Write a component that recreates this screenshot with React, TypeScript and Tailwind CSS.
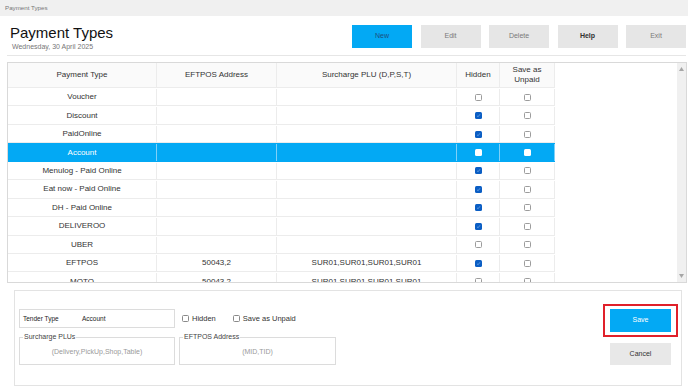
import React from "react";

type Row = {
  name: string;
  eftpos?: string;
  plu?: string;
  hidden: boolean;
  selected?: boolean;
};

const rows: Row[] = [
  { name: "Voucher", hidden: false },
  { name: "Discount", hidden: true },
  { name: "PaidOnline", hidden: true },
  { name: "Account", hidden: false, selected: true },
  { name: "Menulog - Paid Online", hidden: true },
  { name: "Eat now - Paid Online", hidden: true },
  { name: "DH - Paid Online", hidden: true },
  { name: "DELIVEROO", hidden: true },
  { name: "UBER", hidden: false },
  { name: "EFTPOS", eftpos: "50043,2", plu: "SUR01,SUR01,SUR01,SUR01", hidden: true },
  { name: "MOTO", eftpos: "50043,2", plu: "SUR01,SUR01,SUR01,SUR01", hidden: false },
];

function GridCheck({ checked, onBlue }: { checked: boolean; onBlue?: boolean }) {
  if (onBlue) {
    return <span className="block h-[7px] w-[7px] rounded-[1.5px] bg-white" />;
  }
  if (checked) {
    return (
      <span className="flex h-[7px] w-[7px] items-center justify-center rounded-[1.5px] bg-[#0b5ec4]">
        <svg width="5" height="5" viewBox="0 0 10 10">
          <path d="M2 5.5 L4.2 7.5 L8 2.5" fill="none" stroke="#7fb0ea" strokeWidth="1.4" />
        </svg>
      </span>
    );
  }
  return <span className="block h-[7px] w-[7px] rounded-[1.5px] border border-[#9c9c9c] bg-white" />;
}

function TopButton({ label, variant }: { label: string; variant: "blue" | "gray" | "help" }) {
  const cls =
    variant === "blue"
      ? "bg-[#03a9f4] text-[#1d4f80]"
      : variant === "help"
        ? "bg-[#e6e6e6] font-bold text-[#333]"
        : "bg-[#e6e6e6] text-[#7a7a7a]";
  return (
    <div className={`flex h-[23px] w-[60px] items-center justify-center text-[7px] ${cls}`}>
      {label}
    </div>
  );
}

export default function App() {
  const cellBase = "flex items-center justify-center border-r";

  return (
    <div
      className="relative h-[387px] w-[688px] overflow-hidden bg-white text-[#333]"
      style={{ fontFamily: '"Liberation Sans", Arial, sans-serif' }}
    >
      <div className="flex h-[16px] items-center bg-[#f0f0f0] pl-[5px] text-[6.2px] text-[#777]">
        Payment Types
      </div>

      <div className="ml-[7px] mr-[2px] flex h-[40px] justify-between border-b border-[#e6e6e6]">
        <div className="pl-[3px] pt-[7.5px]">
          <div className="text-[15px] leading-[18px] text-[#111]">Payment Types</div>
          <div className="pl-[2px] text-[7px] leading-[9px] text-[#777]">Wednesday, 30 April 2025</div>
        </div>
        <div className="flex gap-[8.5px] pt-[9px]">
          <TopButton label="New" variant="blue" />
          <TopButton label="Edit" variant="gray" />
          <TopButton label="Delete" variant="gray" />
          <TopButton label="Help" variant="help" />
          <TopButton label="Exit" variant="gray" />
        </div>
      </div>

      <div className="ml-[7px] mt-[6px] flex h-[221px] w-[680px] border border-[#d9d9d9]">
        <div className="flex-1 overflow-hidden text-[8px]">
          <div className="flex h-[25px] w-[547px] border-b border-[#ececec] bg-[#fafafa]">
            <div className={`${cellBase} w-[149px] border-[#ececec]`}>Payment Type</div>
            <div className={`${cellBase} w-[120px] border-[#ececec]`}>EFTPOS Address</div>
            <div className={`${cellBase} w-[180px] border-[#ececec]`}>Surcharge PLU (D,P,S,T)</div>
            <div className={`${cellBase} w-[43px] border-[#ececec]`}>Hidden</div>
            <div className={`${cellBase} w-[55px] border-[#ececec] text-center leading-[10px]`}>
              Save as
              <br />
              Unpaid
            </div>
          </div>
          {rows.map((row) => {
            const sel = !!row.selected;
            const line = sel ? "border-[#7fd0f8]" : "border-[#ececec]";
            return (
              <div
                key={row.name}
                className={`flex h-[18.45px] w-[547px] border-b pt-[1px] ${
                  sel ? "border-[#03a9f4] bg-[#03a9f4] text-white" : "border-[#ececec]"
                }`}
              >
                <div className={`${cellBase} w-[149px] ${line}`}>{row.name}</div>
                <div className={`${cellBase} w-[120px] ${line}`}>{row.eftpos ?? ""}</div>
                <div className={`${cellBase} w-[180px] ${line}`}>{row.plu ?? ""}</div>
                <div className={`${cellBase} w-[43px] ${line}`}>
                  <GridCheck checked={row.hidden} onBlue={sel} />
                </div>
                <div className={`${cellBase} w-[55px] ${line}`}>
                  <GridCheck checked={false} onBlue={sel} />
                </div>
              </div>
            );
          })}
        </div>
        <div className="flex w-[9px] flex-col items-center justify-between bg-[#f0f0f0] py-[4px]">
          <svg width="5" height="4" viewBox="0 0 5 4">
            <path d="M2.5 0 L5 4 L0 4 Z" fill="#a6a6a6" />
          </svg>
          <svg width="5" height="4" viewBox="0 0 5 4">
            <path d="M0 0 L5 0 L2.5 4 Z" fill="#a6a6a6" />
          </svg>
        </div>
      </div>

      <div className="ml-[14px] mt-[7px] flex h-[96px] w-[668px] justify-between border border-[#e3e3e3]">
        <div className="pl-[4px] pt-[18px]">
          <div className="flex items-center">
            <div className="flex h-[19px] w-[156px] items-center border border-[#dcdcdc] pl-[3px] text-[6.5px] text-[#222]">
              <span className="w-[59px]">Tender Type</span>
              <span>Account</span>
            </div>
            <span className="ml-[7px] block h-[7px] w-[7px] rounded-[1.5px] border border-[#8a8a8a]" />
            <span className="ml-[3px] text-[7.5px]">Hidden</span>
            <span className="ml-[17px] block h-[7px] w-[7px] rounded-[1.5px] border border-[#8a8a8a]" />
            <span className="ml-[3px] text-[7.5px]">Save as Unpaid</span>
          </div>
          <div className="mt-[5px] flex gap-[4px]">
            <fieldset className="h-[32px] w-[156px] border border-[#dcdcdc] px-[3px]">
              <legend className="px-[1px] text-[7px] leading-[8px] text-[#444]">Surcharge PLUs</legend>
              <div className="pt-[6px] text-center text-[7px] text-[#9a9a9a]">(Delivery,PickUp,Shop,Table)</div>
            </fieldset>
            <fieldset className="h-[32px] w-[157px] border border-[#dcdcdc] px-[3px]">
              <legend className="px-[1px] text-[7px] leading-[8px] text-[#444]">EFTPOS Address</legend>
              <div className="pt-[6px] text-center text-[7px] text-[#9a9a9a]">(MID,TID)</div>
            </fieldset>
          </div>
        </div>
        <div className="flex flex-col items-center pr-[3px] pt-[13px]">
          <div className="border-2 border-[#e0202a] px-[5px] py-[3px]">
            <div className="flex h-[23px] w-[61px] items-center justify-center bg-[#03a9f4] text-[7px] text-white">
              Save
            </div>
          </div>
          <div className="mt-[6px] flex h-[22px] w-[61px] items-center justify-center bg-[#e8e8e8] text-[7px] text-[#333]">
            Cancel
          </div>
        </div>
      </div>
    </div>
  );
}
